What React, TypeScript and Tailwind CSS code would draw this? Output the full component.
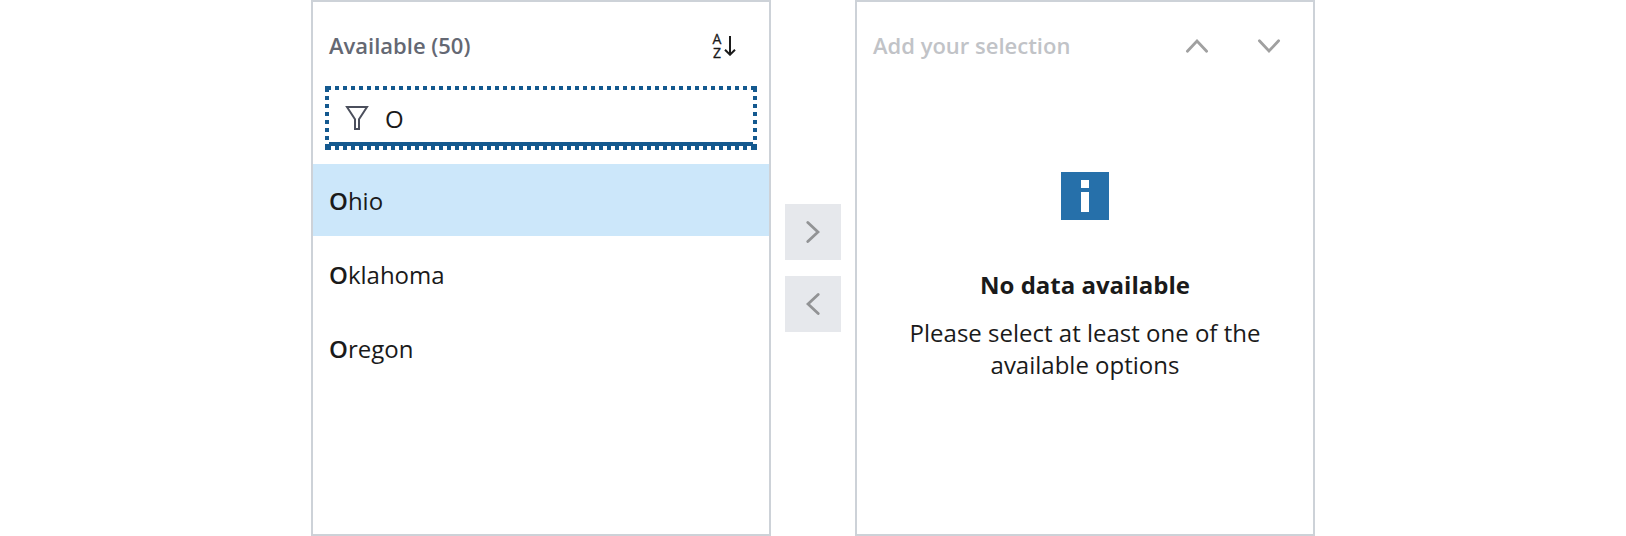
import { useState } from "react";

const OPTIONS = ["Ohio", "Oklahoma", "Oregon"];

function FocusRing() {
  return (
    <svg
      className="pointer-events-none absolute inset-0"
      width="432"
      height="64"
      fill="none"
      stroke="#14598f"
      strokeWidth="4"
      shapeRendering="crispEdges"
    >
      <path strokeDasharray="4 4" d="M2 2H430M2 62H430M2 2V62M430 2V62" />
      <path d="M0 2h6M0 62h6M426 2h6M426 62h6M2 0v6M2 58v6M430 0v6M430 58v6" />
    </svg>
  );
}

function FilterIcon() {
  return (
    <svg className="mt-1" width="24" height="24" viewBox="0 0 24 24" fill="none" stroke="#4b4f5c" strokeWidth="2">
      <path d="M2 1H22L14 13.3V23H10V13.3Z" />
    </svg>
  );
}

function SortIcon() {
  return (
    <div className="flex h-7 items-center gap-[2px] text-[#1a1a1a]">
      <div className="w-[10px] text-center text-[14px] leading-[14px] [-webkit-text-stroke:0.3px_#1a1a1a]">A Z</div>
      <svg width="12" height="20" viewBox="0 0 12 20" fill="none" stroke="currentColor" strokeWidth="2">
        <path d="M6 0V18.5M1 13.7 6 18.7 11 13.7" />
      </svg>
    </div>
  );
}

function Chevron({ d, w, h }: { d: string; w: number; h: number }) {
  return (
    <svg
      width={w}
      height={h}
      viewBox={`0 0 ${w} ${h}`}
      fill="none"
      stroke="currentColor"
      strokeWidth="2.8"
      strokeLinecap="round"
    >
      <path d={d} />
    </svg>
  );
}

function MoveButton({ label, d }: { label: string; d: string }) {
  return (
    <button aria-label={label} className="flex size-14 items-center justify-center bg-[#e6e8ec] text-[#929395]">
      <Chevron d={d} w={14} h={24} />
    </button>
  );
}

export default function App() {
  const [query, setQuery] = useState("O");
  const n = query.length;
  return (
    <main className="flex h-[536px] justify-center bg-white font-['Open_Sans',sans-serif] text-[24px] text-[#1a1a1a]">
      <section className="flex w-[460px] flex-col border-2 border-[#cdd2d8]">
        <header className="flex h-[84px] items-center justify-between pt-1 pr-[33px] pl-4">
          <h2 className="pb-[2px] text-[22px] font-semibold text-[#646873]">Available (50)</h2>
          <SortIcon />
        </header>
        <div className="relative mx-3 h-16 w-[432px] p-1">
          <div className="flex h-full items-center border-b-4 border-[#14598f] pl-4">
            <FilterIcon />
            <input
              aria-label="Filter"
              value={query}
              onChange={(e) => setQuery(e.target.value)}
              className="ml-4 w-80 pt-[6px] outline-none"
            />
          </div>
          <FocusRing />
        </div>
        <ul className="mt-[14px] flex flex-col gap-[2px]">
          {OPTIONS.map((o, i) => (
            <li key={o} className={`flex h-[72px] items-center pt-[2px] pl-4 ${i === 0 ? "bg-[#cce7fa]" : ""}`}>
              <span className="font-semibold">{o.slice(0, n)}</span>
              <span>{o.slice(n)}</span>
            </li>
          ))}
        </ul>
      </section>

      <div className="flex w-[84px] flex-col items-center justify-center gap-4">
        <MoveButton label="Add" d="M1.8 2.4 12 12 1.8 21.6" />
        <MoveButton label="Remove" d="M12.2 2.4 2 12 12.2 21.6" />
      </div>

      <section className="flex w-[460px] flex-col border-2 border-[#cdd2d8]">
        <header className="flex h-[84px] items-center justify-between pt-1 pr-8 pl-4">
          <h2 className="pb-[2px] text-[22px] font-semibold text-[#c1c3c7]">Add your selection</h2>
          <div className="flex gap-12 text-[#a0a0a0]">
            <Chevron d="M2.4 12.2 12 2 21.6 12.2" w={24} h={14} />
            <Chevron d="M2.4 1.8 12 12 21.6 1.8" w={24} h={14} />
          </div>
        </header>
        <div className="flex flex-col items-center pt-[86px] text-center">
          <svg width="48" height="48" viewBox="0 0 48 48" shapeRendering="crispEdges">
            <path fill="#2670aa" d="M0 0h48v48H0z" />
            <path fill="#fff" d="M20 8h8v8h-8zM20 20h8v20h-8z" />
          </svg>
          <h3 className="mt-[49px] leading-8 font-bold">No data available</h3>
          <p className="mt-4 w-[400px] leading-8">Please select at least one of the available options</p>
        </div>
      </section>
    </main>
  );
}
